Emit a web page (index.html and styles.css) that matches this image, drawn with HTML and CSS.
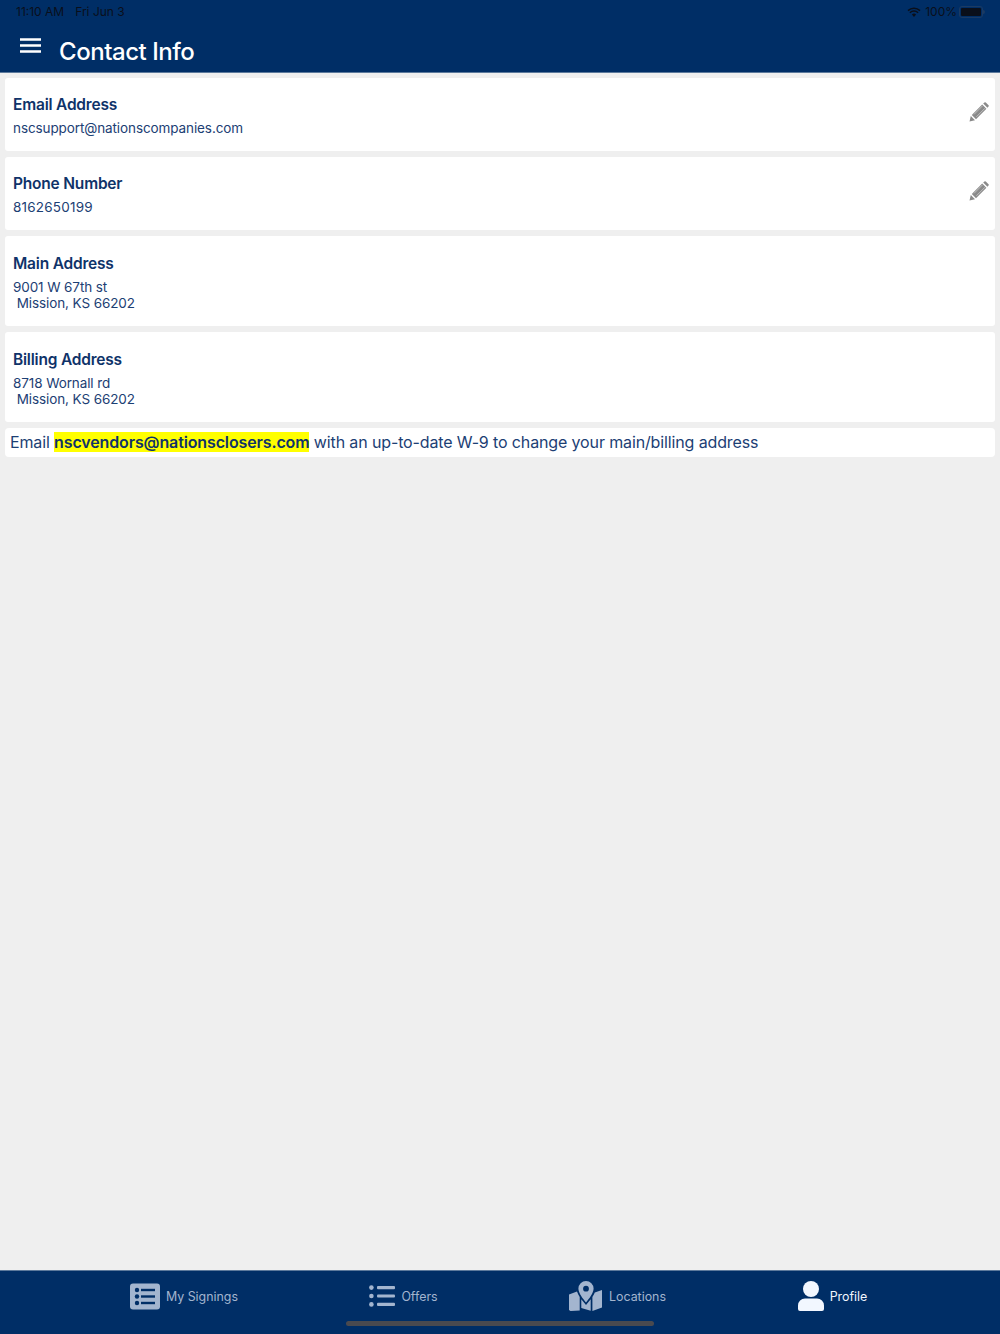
FILE: index.html
```html
<!DOCTYPE html>
<html lang="en">
<head>
  <meta charset="UTF-8">
  <meta name="viewport" content="width=device-width, initial-scale=1.0">
  <title>Contact Info</title>
  <link rel="stylesheet" href="styles.css">
</head>
<body>
  <header class="topbar">
    <div class="status">
      <div class="status-left"><span>11:10 AM</span><span>Fri Jun 3</span></div>
      <div class="status-right">
        <svg class="wifi" viewBox="0 0 14 10" width="14" height="10">
          <path d="M7 10 4.900 7.600a3 3 0 0 1 4.200 0z" fill="#0a0f1a"/>
          <path d="M1 3.600a8.600 8.600 0 0 1 12 0M2.900 5.700a5.800 5.800 0 0 1 8.200 0" fill="none" stroke="#0a0f1a" stroke-width="1.500"/>
        </svg>
        <span>100%</span>
        <span class="battery"><span class="battery-fill"></span></span>
      </div>
    </div>
    <div class="titlebar">
      <svg class="menu-icon" viewBox="0 0 21 15" width="21" height="15">
        <path d="M0 1.500h21M0 7.500h21M0 13.500h21" stroke="#fff" stroke-width="2.400"/>
      </svg>
      <h1>Contact Info</h1>
    </div>
  </header>

  <main class="content">
    <section class="card">
      <div>
        <h2>Email Address</h2>
        <p>nscsupport@nationscompanies.com</p>
      </div>
      <svg class="edit" viewBox="0 0 20 20" width="20" height="20">
        <path d="M0.500 19.500 1.800 14 6 18.200z" fill="#8a8a8a"/>
        <path d="M2.800 13 13.200 2.600 17.400 6.800 7 17.200z" fill="#8a8a8a"/>
        <path d="M14.200 1.600 15.400.5a1 1 0 0 1 1.400 0l2.700 2.700a1 1 0 0 1 0 1.400l-1.100 1.200z" fill="#8a8a8a"/>
        <path d="M5 12.400 13.600 3.800M7.400 14.800 16 6.200" stroke="#fff" stroke-width=".7" opacity=".65"/>
      </svg>
    </section>
    <section class="card">
      <div>
        <h2>Phone Number</h2>
        <p class="phone">8162650199</p>
      </div>
      <svg class="edit" viewBox="0 0 20 20" width="20" height="20">
        <path d="M0.500 19.500 1.800 14 6 18.200z" fill="#8a8a8a"/>
        <path d="M2.800 13 13.200 2.600 17.400 6.800 7 17.200z" fill="#8a8a8a"/>
        <path d="M14.200 1.600 15.400.5a1 1 0 0 1 1.400 0l2.700 2.700a1 1 0 0 1 0 1.400l-1.100 1.200z" fill="#8a8a8a"/>
        <path d="M5 12.400 13.600 3.800M7.400 14.800 16 6.200" stroke="#fff" stroke-width=".7" opacity=".65"/>
      </svg>
    </section>
    <section class="card card-tall">
      <div>
        <h2>Main Address</h2>
        <p>9001 W 67th st<br>&nbsp;Mission, KS 66202</p>
      </div>
    </section>
    <section class="card card-tall">
      <div>
        <h2>Billing Address</h2>
        <p>8718 Wornall rd<br>&nbsp;Mission, KS 66202</p>
      </div>
    </section>
    <div class="notice">Email <mark>nscvendors@nationsclosers.com</mark> with an up-to-date W-9 to change your main/billing address</div>
  </main>

  <nav class="tabs">
    <a class="tab tab-signings" href="#">
      <svg viewBox="0 0 30 27" width="30" height="27">
        <rect width="30" height="26" y=".5" rx="3" fill="#a3b5cf"/>
        <g fill="#002e66">
          <circle cx="7" cy="7" r="2.200"/><circle cx="7" cy="13.500" r="2.200"/><circle cx="7" cy="20" r="2.200"/>
          <rect x="11" y="5.800" width="14" height="2.400"/><rect x="11" y="12.300" width="14" height="2.400"/><rect x="11" y="18.800" width="14" height="2.400"/>
        </g>
      </svg>
      <span>My Signings</span>
    </a>
    <a class="tab tab-offers" href="#">
      <svg viewBox="0 0 26 22" width="26" height="22">
        <g fill="#a3b5cf">
          <circle cx="2.400" cy="2.600" r="2.300"/><circle cx="2.400" cy="11" r="2.300"/><circle cx="2.400" cy="19.400" r="2.300"/>
          <rect x="8" y="1" width="18" height="3.200" rx="1"/><rect x="8" y="9.400" width="18" height="3.200" rx="1"/><rect x="8" y="17.800" width="18" height="3.200" rx="1"/>
        </g>
      </svg>
      <span>Offers</span>
    </a>
    <a class="tab tab-locations" href="#">
      <svg viewBox="0 0 34 30" width="34" height="30">
        <g fill="#a3b5cf">
          <path d="M0 13.500 8 10.500c.6 2 1.600 3.700 2.700 5.400V29.500L1.500 30 0 29z"/>
          <path d="M12.300 18.200 17 24l4.700-5.800V29.700L12.300 27z"/>
          <path d="M23.400 16c1-1.600 1.800-3 2.400-4.400L33 9v17.500L23.400 30z"/>
          <path fill-rule="evenodd" d="M17 0a7.600 7.600 0 0 1 7.600 7.600C24.600 12 20 18 17 21.500 14 18 9.400 12 9.400 7.600A7.600 7.600 0 0 1 17 0zm0 4.800a2.900 2.900 0 1 0 0 5.800 2.900 2.900 0 0 0 0-5.800z"/>
        </g>
      </svg>
      <span>Locations</span>
    </a>
    <a class="tab tab-profile active" href="#">
      <svg viewBox="0 0 26 30" width="26" height="30">
        <g fill="#f2f7ff">
          <circle cx="13" cy="8" r="8"/>
          <path d="M7 17.500h12a7 7 0 0 1 7 7V28a2 2 0 0 1-2 2H2a2 2 0 0 1-2-2v-3.500a7 7 0 0 1 7-7z"/>
        </g>
      </svg>
      <span>Profile</span>
    </a>
    <div class="home-bar"></div>
  </nav>
</body>
</html>
```

FILE: styles.css
```css
* {
  box-sizing: border-box;
}
html, body {
  height: 100%;
}
body {
  margin: 0;
  display: flex;
  flex-direction: column;
  height: 1334px;
  overflow: hidden;
  background: #efefef;
  color: #002e66;
  font-family: Inter, "Liberation Sans", sans-serif;
}
.topbar {
  height: 73px;
  background: #002e66;
  border-bottom: 1px solid #5d7a9c;
  flex-shrink: 0;
}
.status {
  height: 23px;
  padding: 5px 17px 0 16px;
  display: flex;
  justify-content: space-between;
  font-size: 12px;
  line-height: 14px;
  color: #0a0f1a;
}
.status-left span {
  margin-right: 11px;
}
.status-right {
  display: flex;
  align-items: center;
  gap: 4px;
  height: 14px;
}
.battery {
  position: relative;
  width: 24px;
  height: 12px;
  margin-left: -2px;
  border: 1px solid #1b3a63;
  border-radius: 3px;
  padding: 1px;
}
.battery::after {
  content: "";
  position: absolute;
  right: -3px;
  top: 3px;
  width: 2px;
  height: 4px;
  background: #1b3a63;
  border-radius: 0 2px 2px 0;
}
.battery-fill {
  display: block;
  height: 100%;
  background: #0a0f1a;
  border-radius: 1px;
}
.titlebar {
  display: flex;
  align-items: center;
  padding: 7px 0 0 20px;
  height: 49px;
}
.menu-icon {
  margin-top: -12px;
}
.titlebar h1 {
  margin: 0 0 0 18px;
  color: #fff;
  font-size: 24px;
  font-weight: 500;
  letter-spacing: -0.45px;
}
.content {
  flex: 1;
  display: flex;
  flex-direction: column;
  gap: 6px;
  padding: 5px 5px 0;
}
.card {
  height: 73px;
  background: #fff;
  border-radius: 3px;
  padding: 17px 8px 0;
  display: flex;
  justify-content: space-between;
}
.card-tall {
  height: 90px;
  padding-top: 18px;
}
.card h2 {
  margin: 0;
  font-size: 15.5px;
  line-height: 20px;
  font-weight: 600;
  letter-spacing: -0.2px;
  color: #0f3369;
}
.card p {
  margin: 5px 0 0;
  font-size: 13.5px;
  line-height: 16px;
  letter-spacing: -0.1px;
  color: #1c4074;
}
.card p.phone {
  letter-spacing: 0.2px;
}
.edit {
  margin: 7px -2px 0 0;
}
.notice {
  height: 29px;
  background: #fff;
  border-radius: 4px;
  padding-left: 5px;
  font-size: 16px;
  line-height: 29px;
  letter-spacing: -0.13px;
  color: #1c4074;
}
.notice mark {
  background: #ffff00;
  color: #0f3369;
  font-weight: 600;
}
.tabs {
  height: 64px;
  flex-shrink: 0;
  background: #002e66;
  border-top: 1px solid #5d7a9c;
  position: relative;
  display: grid;
  grid-template-columns: 1fr 1fr 1fr 1fr;
  padding: 0 60px 0 80px;
}
.tab {
  display: flex;
  align-items: center;
  justify-content: center;
  gap: 6px;
  height: 50px;
  color: #a3b5cf;
  font-size: 12.4px;
  text-decoration: none;
}
.tab-signings {
  padding-right: 7px;
}
.tab-offers {
  padding-left: 2px;
}
.tab.active {
  color: #f2f7ff;
}
.home-bar {
  position: absolute;
  left: 346px;
  bottom: 8px;
  width: 308px;
  height: 5px;
  border-radius: 3px;
  background: #4a4a4f;
}
```
